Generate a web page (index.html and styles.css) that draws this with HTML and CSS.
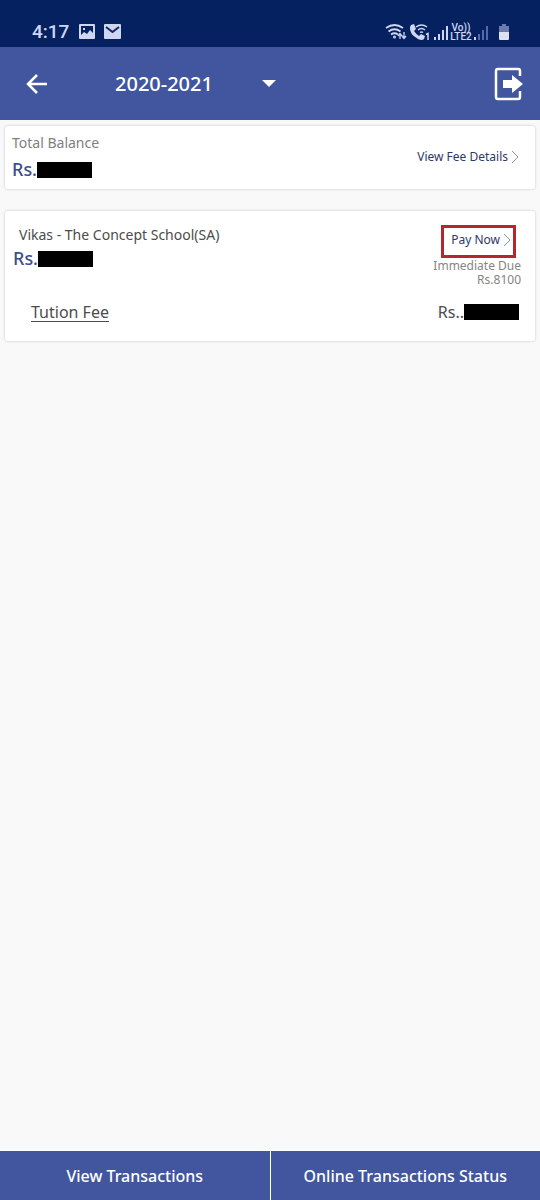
FILE: index.html
```html
<!DOCTYPE html>
<html lang="en">
<head>
<meta charset="utf-8">
<meta name="viewport" content="width=device-width, initial-scale=1">
<title>Fee Payment</title>
<link rel="stylesheet" href="styles.css">
</head>
<body>
<div class="status-bar">
  <span class="clock">4:17</span>
  <svg class="status-left" width="44" height="20" viewBox="0 0 44 20" aria-hidden="true">
    <path fill="#cfd6f2" fill-rule="evenodd" d="M2 2h14a1 1 0 0 1 1 1v13a1 1 0 0 1-1 1H2a1 1 0 0 1-1-1V3a1 1 0 0 1 1-1zM3 4v9l3-3 3 2 3-4 3 3V4zM5 6h2v2H5z"/>
    <rect x="26" y="2" width="17" height="15" rx="1" fill="#cfd6f2"/>
    <path d="M28 5l6.500 5L41 5" fill="none" stroke="#16275f" stroke-width="2"/>
  </svg>
  <div class="status-right">
    <svg width="48" height="20" viewBox="0 0 48 20" aria-hidden="true">
      <g fill="none" stroke="#cfd6f2" stroke-width="1.800">
        <path d="M1 6q8.500-6 17 0M3.500 9.500q6-4.500 12 0M6 12.500q3.500-2.500 7 0"/>
        <circle cx="9.500" cy="15" r=".6"/>
        <path stroke-width="1.300" d="M15 17v-5M13 14l2-2.500 2 2.500M19 10v6M17 14l2 2.500 2-2.500"/>
        <path stroke-width="1.500" d="M31 5q5.500-4 11 0M33 8q3.500-3 7 0M35 10.500q1.500-1 3 0"/>
      </g>
      <path fill="#cfd6f2" d="M26 3l3-1 2 5-2 2q2 3 5 5l2-2 4 2-1 3q-2 2-6 0-9-5-8-12z"/>
      <path fill="none" stroke="#cfd6f2" stroke-width="1.500" d="M41 12.500l2-1V18"/>
    </svg>
    <svg width="16" height="20" viewBox="0 0 16 20" aria-hidden="true">
      <path fill="#cfd6f2" d="M1 15h2v3H1zM5 12h2v6H5zM9 8h2v10H9zM13 4h2v14h-2z"/>
    </svg>
    <span class="network"><span>Vo))</span><span>LTE2</span></span>
    <svg width="16" height="20" viewBox="0 0 16 20" aria-hidden="true">
      <path fill="#cfd6f2" d="M1 15h2v3H1z"/>
      <path fill="#5569a8" d="M5 12h2v6H5zM9 8h2v10H9zM13 4h2v14h-2z"/>
    </svg>
    <svg class="battery" width="12" height="20" viewBox="0 0 12 20" aria-hidden="true">
      <path fill="#6d7aac" d="M4 2h4v2h3v6H1V4h3z"/>
      <path fill="#dde1f3" d="M1 10h10v7a1 1 0 0 1-1 1H2a1 1 0 0 1-1-1z"/>
    </svg>
  </div>
</div>

<header class="app-bar">
  <button class="icon-button" type="button" aria-label="Back">
    <svg width="22" height="20" viewBox="0 0 22 20" aria-hidden="true"><path d="M11 1L2 10l9 9M2 10h19" fill="none" stroke="#fff" stroke-width="2.500"/></svg>
  </button>
  <div class="year">
    <select class="year-select" aria-label="Academic year"><option>2020-2021</option></select>
    <svg class="year-caret" width="14" height="8" viewBox="0 0 14 8" aria-hidden="true"><path fill="#fff" d="M0 0h14L7 7z"/></svg>
  </div>
  <button class="icon-button logout" type="button" aria-label="Log out">
    <svg width="30" height="34" viewBox="0 0 30 34" aria-hidden="true">
      <path d="M26 9V4a2 2 0 0 0-2-2H4a2 2 0 0 0-2 2v26a2 2 0 0 0 2 2h20a2 2 0 0 0 2-2v-6" fill="none" stroke="#fff" stroke-width="2.500"/>
      <path fill="#fff" d="M9 13h9V8l11 9-11 9v-5H9z"/>
    </svg>
  </button>
</header>

<main class="content">
  <section class="card balance">
    <div>
      <h2 class="balance-title">Total Balance</h2>
      <p class="amount">Rs.<span class="masked"></span></p>
    </div>
    <a class="action details" href="#">View Fee Details<svg width="8" height="14" viewBox="0 0 8 14" aria-hidden="true"><path class="chevron" d="M1 1l6 6-6 6"/></svg></a>
  </section>

  <section class="card school">
    <div class="school-top">
      <div>
        <h2 class="school-name">Vikas - The Concept School(SA)</h2>
        <p class="amount">Rs.<span class="masked"></span></p>
      </div>
      <div class="due">
        <button class="action pay" type="button">Pay Now<svg width="8" height="14" viewBox="0 0 8 14" aria-hidden="true"><path class="chevron" d="M1 1l6 6-6 6"/></svg></button>
        <p class="due-text">Immediate Due</p>
        <p class="due-text">Rs.8100</p>
      </div>
    </div>
    <div class="fee">
      <a class="fee-name" href="#">Tution Fee</a>
      <span class="fee-sum">Rs..<span class="masked"></span></span>
    </div>
  </section>
</main>

<nav class="bottom-bar">
  <button class="tab" type="button">View Transactions</button>
  <button class="tab" type="button">Online Transactions Status</button>
</nav>
</body>
</html>
```
FILE: styles.css
```css
* {
  box-sizing: border-box;
}

body {
  margin: 0;
  min-height: 100vh;
  display: flex;
  flex-direction: column;
  background: #f9f9f9;
  font-family: "Noto Sans", "Open Sans", sans-serif;
  color: #4c4c4c;
}

h2,
p {
  margin: 0;
  font-weight: 400;
}

button,
select {
  font-family: inherit;
  border: 0;
  border-radius: 0;
  background: none;
  padding: 0;
}

svg {
  display: block;
  flex: none;
}

.status-bar {
  display: flex;
  align-items: center;
  height: 47px;
  padding: 16px 30px 0 32px;
  background: #06215f;
  color: #cfd6f2;
}

.clock {
  font: 500 19px/28px Roboto, sans-serif;
}

.status-left {
  margin-left: 9px;
}

.status-right {
  display: flex;
  align-items: center;
  margin-left: auto;
}

.network {
  display: flex;
  flex-direction: column;
  align-items: center;
  width: 24px;
  font: 500 10px/9px Roboto, sans-serif;
}

.battery {
  margin-left: 9px;
}

.app-bar {
  display: flex;
  align-items: center;
  height: 73px;
  padding: 0 16px 0 26px;
  background: #41569f;
}

.icon-button {
  display: flex;
}

.year {
  display: flex;
  align-items: center;
  position: relative;
  margin-left: 67px;
}

.year-select {
  appearance: none;
  width: 161px;
  height: 40px;
  color: #fff;
  font-size: 20px;
  font-weight: 500;
}

.year-caret {
  position: absolute;
  right: 0;
  pointer-events: none;
}

.logout {
  margin-left: auto;
}

.content {
  flex: 1;
  display: flex;
  flex-direction: column;
  gap: 22px;
  padding: 6px 5px;
}

.card {
  border-radius: 3px;
  background: #fff;
  box-shadow: 0 0 3px #0003;
}

.balance {
  display: flex;
  justify-content: space-between;
  align-items: center;
  padding: 4px 16px 6px 7px;
}

.balance-title {
  color: #808080;
  font-size: 14px;
  line-height: 26px;
}

.amount {
  display: flex;
  align-items: center;
  color: #3c4d8a;
  font-size: 18px;
  font-weight: 500;
  line-height: 27px;
}

.masked {
  width: 55px;
  height: 16px;
  background: #000;
}

.action {
  display: flex;
  align-items: center;
  gap: 3px;
  color: #2d3966;
  font-size: 12px;
  font-weight: 400;
  line-height: 18px;
  text-decoration: none;
}

.chevron {
  fill: none;
  stroke: #8d92a4;
  stroke-width: 1;
}

.school {
  padding: 14px 14px 16px 8px;
}

.school-top {
  display: flex;
  justify-content: space-between;
}

.school-name {
  padding-left: 6px;
  font-size: 14px;
  line-height: 20px;
}

.due {
  display: flex;
  flex-direction: column;
  align-items: flex-end;
}

.pay {
  height: 33px;
  margin: 0 5px 1px 0;
  padding: 0 2px 3px 7px;
  border: 3px solid #b3282f;
}

.due-text {
  color: #858585;
  font-size: 12px;
  line-height: 14px;
}

.fee {
  display: flex;
  justify-content: space-between;
  align-items: center;
  margin-top: 12px;
  padding: 0 2px 0 18px;
  font-size: 16px;
  line-height: 26px;
}

.fee-name {
  color: inherit;
  text-decoration-thickness: 1px;
  text-underline-offset: 3px;
}

.fee-sum {
  display: flex;
  align-items: center;
}

.bottom-bar {
  display: grid;
  grid-template-columns: 1fr 1fr;
  gap: 1px;
  border-top: 1px solid #fff;
  background: #fff;
}

.tab {
  height: 49px;
  background: #41569f;
  color: #fff;
  font-size: 16px;
  font-weight: 500;
}
```
